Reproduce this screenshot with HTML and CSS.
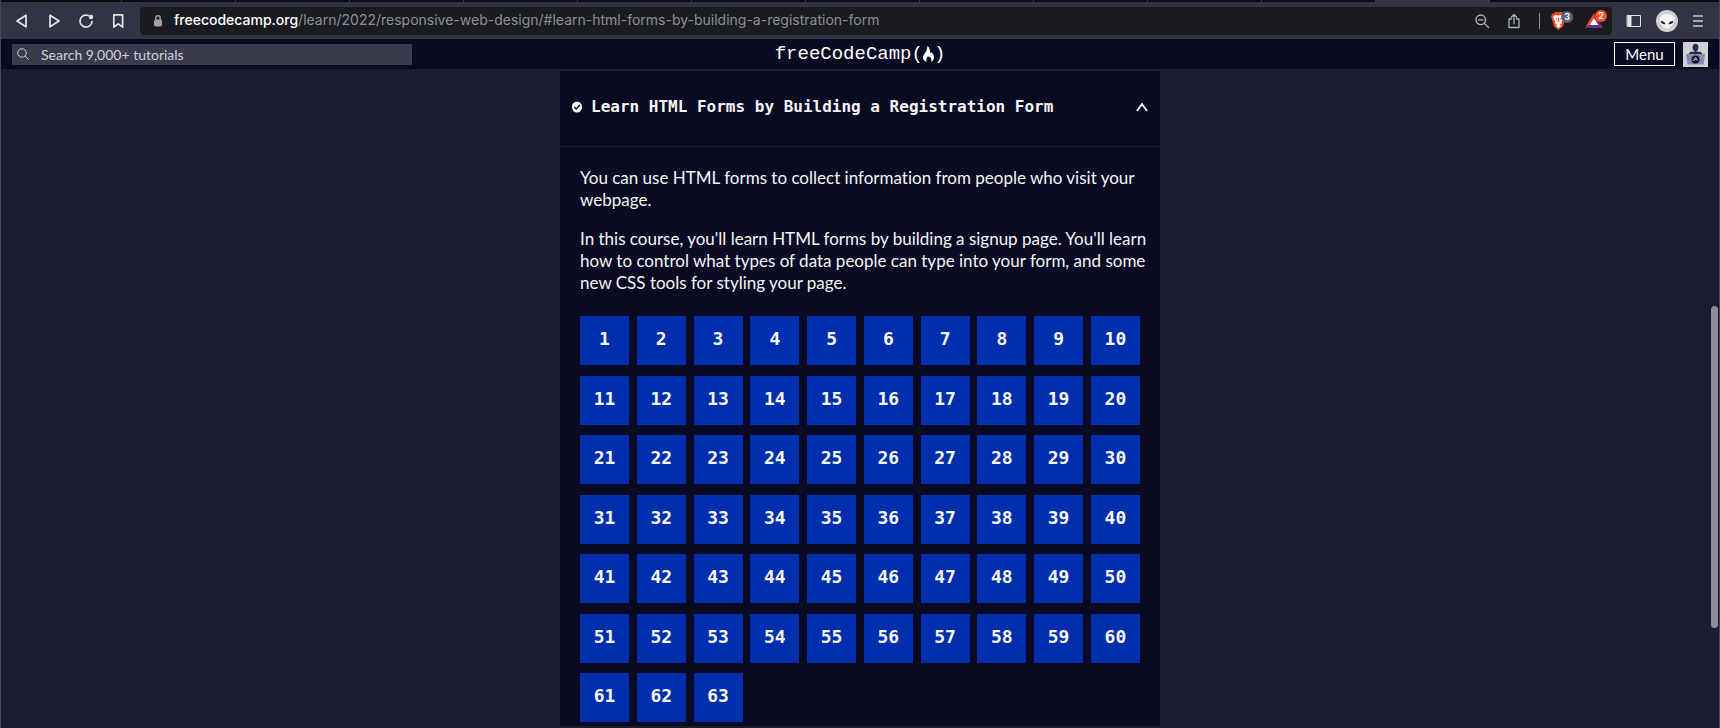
FILE: index.html
```
<!DOCTYPE html>
<html lang="en">
<head>
<meta charset="utf-8">
<title>Responsive Web Design</title>
<link rel="stylesheet" href="styles.css">
</head>
<body>
<div class="tabs"><span class="tab"></span><span class="tab"></span><span class="tab"></span><span class="tab"></span><span class="tab"></span><span class="tab"></span><span class="tab"></span><span class="tab"></span><span class="tab"></span><span class="tab"></span><span class="tab"></span><span class="tab"></span><span class="tab tab-active"></span></div>
<div class="toolbar">
  <nav class="nav">
    <button class="tool" aria-label="Back"><svg width="16" height="16" viewBox="0 0 16 16"><path d="M12 2.200v11.600L3 8z"/></svg></button>
    <button class="tool" aria-label="Forward"><svg width="16" height="16" viewBox="0 0 16 16"><path d="M4 2.200v11.600L13 8z"/></svg></button>
    <button class="tool" aria-label="Reload"><svg width="16" height="16" viewBox="0 0 16 16"><path d="M10.500 2.600A6 6 0 1 0 14 8.600"/><circle class="solid" cx="13" cy="4" r="2.200"/></svg></button>
    <button class="tool" aria-label="Bookmark"><svg width="16" height="16" viewBox="0 0 16 16"><path d="M3.800 1.800h8.800v12.400l-4.400-3.400-4.400 3.400z"/></svg></button>
  </nav>
  <div class="address">
    <svg class="lock" width="10" height="14" viewBox="0 0 10 14"><rect x="1.500" y="6" width="7" height="6" rx="1"/><path d="M2.800 6.500V4a2.200 2.200 0 0 1 4.400 0v2.500"/></svg>
    <p class="url"><b>freecodecamp.org</b>/learn/2022/responsive-web-design/#learn-html-forms-by-building-a-registration-form</p>
    <button class="tool thin" aria-label="Zoom"><svg width="16" height="16" viewBox="0 0 16 16"><circle cx="6.800" cy="6.800" r="4.800"/><path d="M10.400 10.400 14.500 14.500M4.500 6.800h4.600"/></svg></button>
    <button class="tool thin share" aria-label="Share"><svg width="16" height="16" viewBox="0 0 16 16"><path d="M5.500 6H3v8.500h10V6h-2.500M8 10.500V1.500M5.300 4.200 8 1.500l2.700 2.700"/></svg></button>
    <span class="rule"></span>
    <button class="ext" aria-label="Shields"><svg width="15" height="18" viewBox="0 0 15 18"><path fill="#fb4a1e" d="M4 0h7l1.500 1.700 1.500.3 1 3-1 2-2 7.500L7.500 18 3 14.500 1 7 0 5l1-3 1.500-.3z"/><path fill="#fff" d="m2.500 4 2.500-1 2.500.500 2.500-.500 2.500 1 .200 2.500-2 3 .300 1.500-2 1.500 1 1.500-2.500 2-2.500-2 1-1.500-2-1.500L4.300 9.500l-2-3z"/><path fill="#fb4a1e" d="m4 6 2.200.7-.7 1.300zM11 6l-2.200.7.7 1.300zM7 5.500h1l.4 4-.9.7-.9-.7z"/></svg><span class="badge">3</span></button>
    <button class="ext rewards" aria-label="Rewards"><svg width="18" height="15" viewBox="0 0 18 15"><path fill="#ff4724" d="M9 0v5L4.500 12 0 15z"/><path fill="#9e1f63" d="M9 0v5l4.500 7 4.500 3z"/><path fill="#662d91" d="m0 15 4.500-3.500h9L18 15z"/><path fill="#fff" d="m9 5 4.500 7h-9z"/></svg><span class="badge badge-red">2</span></button>
  </div>
  <div class="side">
    <button class="tool" aria-label="Sidebar"><svg width="16" height="16" viewBox="0 0 16 16"><path class="frame" d="M1.500 2.500h13v11h-13z"/><path class="solid" d="M1.500 2.500h4v11h-4z"/></svg></button>
    <button class="tool" aria-label="Profile"><svg width="22" height="22" viewBox="0 0 22 22"><circle fill="#cfcfcf" stroke="none" cx="11" cy="11" r="11"/><path fill="#f2f2f2" stroke="none" d="M3.500 9.500c0-7.500 15-7.500 15 0 0 4-4.500 9-7.500 9s-7.500-5-7.500-9z"/><path fill="#222" stroke="none" d="M4.500 11c2.500-.3 4.500 1 5.200 3.300-2.500.3-4.700-1-5.200-3.300zM17.500 11c-2.500-.3-4.500 1-5.200 3.300 2.500.3 4.700-1 5.200-3.300z"/></svg></button>
    <button class="tool" aria-label="Main menu"><svg class="bars" width="12" height="14" viewBox="0 0 12 14"><path d="M1 2h10M1 7h10M1 12h10"/></svg></button>
  </div>
</div>
<header class="site">
  <label class="search"><svg width="12" height="12" viewBox="0 0 12 12"><circle cx="5" cy="5" r="4.200"/><path d="m8 8 3.500 3.500"/></svg><input type="text" placeholder="Search 9,000+ tutorials" aria-label="Search tutorials"></label>
  <a class="logo" href="#">freeCodeCamp<span class="mark">(<svg width="11" height="16" viewBox="0 0 11 16"><path d="M4.300 0C7.300 2 6.500 4.500 7.500 7c.500.900 1.100.200.900-1C9.800 7.200 11 9 11 11.200c0 2.300-1.200 3.900-3 4.800 1-2 .2-3.300-1.200-5.500-.3 1.300-1.200.8-1.500-.5-1.500 1.500-2.500 3.500-1.800 6C1.500 15.200 0 13.700 0 11.500 0 8 4.800 5.500 4.300 0z"/></svg>)</span></a>
  <div class="account">
    <button class="menu">Menu</button>
    <a class="avatar" href="#" aria-label="Profile"><svg width="25" height="25" viewBox="0 0 25 25"><path fill="#d0d0d5" d="M0 0h25v25H0z"/><ellipse fill="#2a2a50" cx="12.500" cy="5.500" rx="2.900" ry="3.700"/><path fill="#2a2a50" d="M11.500 8h2v1.700h4l2 2.300h-14l2-2.300h4z"/><path fill="#858ab8" d="M3 12h19l-1.500 10.500h-16z"/><circle fill="#0a0a23" cx="12.500" cy="17.500" r="4"/><path fill="none" stroke="#aaaacd" d="m10.500 19 2-4 2 4M11 17.500h3"/></svg></a>
  </div>
</header>
<main class="page">
  <section class="panel">
    <h3 class="heading"><button class="toggle" aria-expanded="true"><svg class="check" width="10" height="12" viewBox="0 0 10 12"><ellipse cx="5" cy="6" rx="5" ry="5.500"/><path d="m2.200 6 2 2 3.800-4"/></svg><span>Learn HTML Forms by Building a Registration Form</span><svg class="caret" width="12" height="10" viewBox="0 0 12 10"><path d="m1 9 5-7 5 7"/></svg></button></h3>
    <div class="body">
      <p>You can use HTML forms to collect information from people who visit your webpage.</p>
      <p>In this course, you'll learn HTML forms by building a signup page. You'll learn how to control what types of data people can type into your form, and some new CSS tools for styling your page.</p>
      <nav class="steps" id="steps" aria-label="Steps"></nav>
    </div>
  </section>
</main>
<div class="scrollbar"></div>
<script src="steps.js"></script>
</body>
</html>
```
FILE: steps.js
```
const steps = document.getElementById("steps");
for (let n = 1; n <= 63; n++) {
  const link = document.createElement("a");
  link.className = "step";
  link.href = "#step-" + n;
  link.textContent = n;
  steps.append(link);
}
```
FILE: styles.css
```
* { box-sizing: border-box; }
body { margin: 0; min-height: 100vh; border: solid #45444f; border-width: 0 1px; background: #1b1b32; color: #f5f6f7; font-family: Lato, sans-serif; font-variant-ligatures: none; overflow: hidden; }
button { border: 0; padding: 0; background: none; color: inherit; font: inherit; }
a { color: inherit; text-decoration: none; }
p { margin: 0; }
svg { display: block; flex: none; }

.tabs { display: flex; height: 2px; background: #0c0b12; padding-left: 7px; }
.tab { width: 114px; border-right: 1px solid #3a3a44; }
.tab-active { background: #323443; }

.toolbar { display: flex; align-items: center; height: 37px; background: #323443; font-family: Inter, sans-serif; }
.nav { display: flex; gap: 16px; padding: 0 13px; width: 139px; }
.tool svg { fill: none; stroke: #e4e4e8; stroke-width: 1.700; stroke-linejoin: round; stroke-linecap: round; }
.tool .solid { fill: #e4e4e8; stroke: none; }
.tool .frame { stroke-width: 1; }
.tool .bars { stroke: #c8c8cf; stroke-linecap: butt; }
.thin svg { stroke: #b0b2b8; stroke-width: 1.300; }
.address { flex: 1; display: flex; align-items: center; height: 28px; padding: 0 5px 0 13px; background: #191b21; border-radius: 4px; }
.lock { fill: #a0a2aa; stroke: #a0a2aa; stroke-width: 1; }
.lock path { fill: none; stroke-width: 1.500; }
.url { flex: 1; padding: 0 0 2px 11px; font-size: 14px; line-height: 20px; color: #8d8f94; white-space: nowrap; }
.url b { font-weight: 500; color: #fff; }
.share { margin-left: 16px; }
.rule { width: 1px; height: 16px; margin: 0 11px 0 17px; background: #8d8f94; }
.ext { position: relative; width: 22px; }
.rewards { margin-left: 12px; }
.badge { position: absolute; top: -1px; right: 0; width: 12px; height: 12px; border-radius: 6px; background: #62656f; color: #fff; font-size: 9px; line-height: 12px; font-weight: 600; }
.rewards .badge { top: -3px; background: #fb542b; }
.side { display: flex; align-items: center; gap: 14px; padding: 0 15px 0 14px; }

.site { display: grid; grid-template-columns: 1fr auto 1fr; align-items: center; height: 30px; padding: 0 11px; background: #0a0a23; }
.search { display: flex; align-items: center; width: 400px; height: 21px; padding-left: 5px; background: #3b3b4f; }
.search svg { fill: none; stroke: #d0d0d5; stroke-width: 1; }
.search input { flex: 1; height: 21px; border: 0; padding: 0 0 0 12px; background: none; color: #d0d0d5; font: 14px Lato, sans-serif; outline: 0; }
.search input::placeholder { color: #d0d0d5; opacity: 1; }
.logo { display: flex; align-items: center; font: 19px/24px "Liberation Mono", monospace; color: #fff; }
.mark { display: flex; align-items: center; }
.mark svg { fill: #fff; }
.account { display: flex; justify-content: flex-end; align-items: center; gap: 8px; }
.menu { width: 61px; height: 24px; border: 1px solid #fff; color: #fff; font-size: 15px; line-height: 20px; }

.page { padding: 2px 0 3px; }
.panel { max-width: 600px; margin: 0 auto; background: #0a0a23; }
.heading { margin: 0; border-bottom: 1px solid #1b1b32; }
.toggle { display: flex; align-items: center; width: 100%; height: 75px; padding: 0 12px 3px; gap: 9px; font: bold 16px/20px "DejaVu Sans Mono", monospace; text-align: left; }
.toggle span { flex: 1; }
.check { fill: #fff; }
.check path { fill: none; stroke: #0a0a23; stroke-width: 1.500; }
.caret { fill: none; stroke: #fff; stroke-width: 1.800; }
.body { padding: 20px 8px 4px 20px; font-size: 17px; line-height: 22px; }
.body p { margin-bottom: 17px; }
.steps { display: grid; grid-template-columns: repeat(10, 49px); grid-auto-rows: 49px; justify-content: space-between; align-content: space-between; min-height: 406px; margin: 22px 12px 0 0; }
.step { background: #002ead; text-align: center; font: bold 18px/45px "DejaVu Sans Mono", monospace; }

.scrollbar { position: fixed; right: 2px; top: 306px; width: 7px; height: 322px; border-radius: 4px; background: #8d8d98; }
```
